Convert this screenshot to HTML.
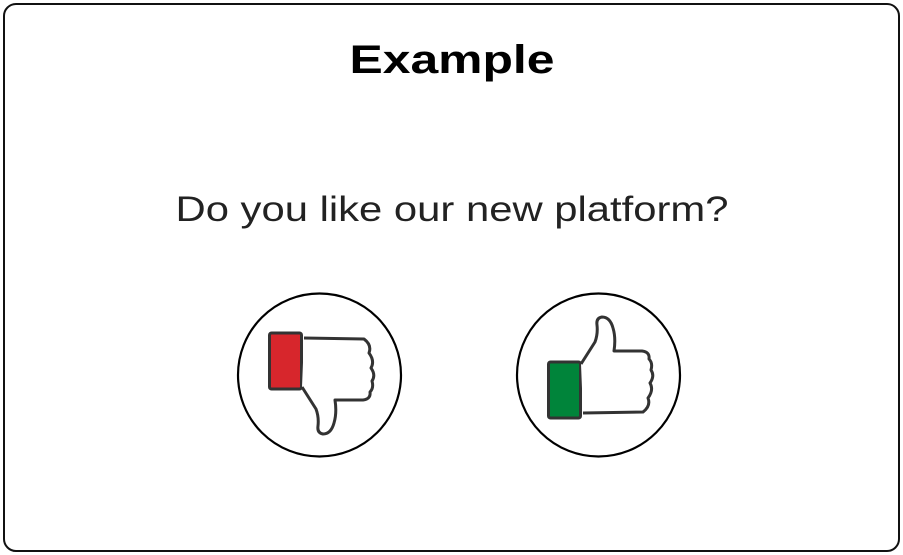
<!DOCTYPE html>
<html><head><style>html,body{margin:0;padding:0;background:#fff;}svg{display:block}</style></head>
<body>
<svg width="903" height="555" viewBox="0 0 903 555" xmlns="http://www.w3.org/2000/svg">
<rect x="4" y="4" width="895" height="547" rx="12" fill="#fff" stroke="#111" stroke-width="2"/>
<text x="452" y="73" text-anchor="middle" font-family="Liberation Sans, sans-serif" font-weight="bold" font-size="40" textLength="205" lengthAdjust="spacingAndGlyphs" fill="#000">Example</text>
<text x="452" y="221" text-anchor="middle" font-family="Liberation Sans, sans-serif" font-size="35" textLength="553" lengthAdjust="spacingAndGlyphs" fill="#222">Do you like our new platform?</text>
<circle cx="319.5" cy="375" r="81.5" fill="none" stroke="#000" stroke-width="2.2"/>
<circle cx="598.5" cy="375" r="81.5" fill="none" stroke="#000" stroke-width="2.2"/>
<g id="up">
<rect x="548.5" y="362" width="32" height="56" rx="2" fill="#00843a" stroke="#333" stroke-width="3"/>
<path d="M581 364 L595 342 Q598 334 597 325 Q596 318 602 317 Q610 317 613 328 Q616 338 614 351 L642 351 Q650 352 649 359 Q653 363 651 370 Q655 376 650 383 Q654 390 648 398 Q651 406 643 412 L583 413" fill="#fff" stroke="#333" stroke-width="3" stroke-linejoin="round"/>
</g>
<g transform="translate(-279,751) scale(1,-1)">
<rect x="548.5" y="362" width="32" height="56" rx="2" fill="#d7262c" stroke="#333" stroke-width="3"/>
<path d="M581 364 L595 342 Q598 334 597 325 Q596 318 602 317 Q610 317 613 328 Q616 338 614 351 L642 351 Q650 352 649 359 Q653 363 651 370 Q655 376 650 383 Q654 390 648 398 Q651 406 643 412 L583 413" fill="#fff" stroke="#333" stroke-width="3" stroke-linejoin="round"/>
</g>
</svg>
</body></html>
